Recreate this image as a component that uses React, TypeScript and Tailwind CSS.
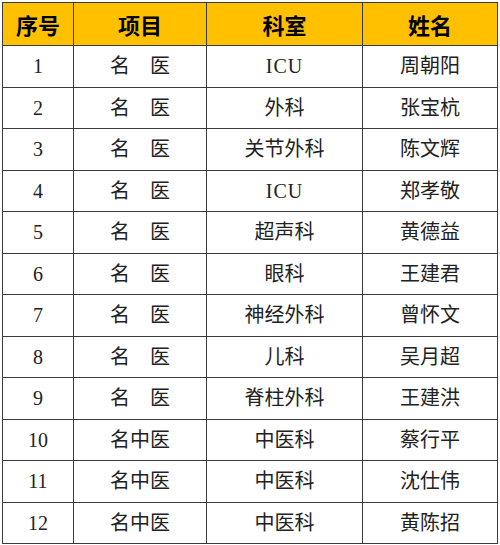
const rows: [string, string, string, string][] = [
  ["1", "名　医", "ICU", "周朝阳"],
  ["2", "名　医", "外科", "张宝杭"],
  ["3", "名　医", "关节外科", "陈文辉"],
  ["4", "名　医", "ICU", "郑孝敬"],
  ["5", "名　医", "超声科", "黄德益"],
  ["6", "名　医", "眼科", "王建君"],
  ["7", "名　医", "神经外科", "曾怀文"],
  ["8", "名　医", "儿科", "吴月超"],
  ["9", "名　医", "脊柱外科", "王建洪"],
  ["10", "名中医", "中医科", "蔡行平"],
  ["11", "名中医", "中医科", "沈仕伟"],
  ["12", "名中医", "中医科", "黄陈招"],
];

const headers = ["序号", "项目", "科室", "姓名"];

export default function App() {
  return (
    <div className="w-[500px] h-[545px] bg-white pt-[2px] pl-[2px]">
      <div className="grid grid-cols-[71px_133px_156px_135px] grid-rows-[43px_repeat(12,41.5px)] w-[496px] border-l border-t border-[#3a3a3a]">
        {headers.map((h) => (
          <div
            key={h}
            className="flex items-center justify-center bg-[#ffc000] border-r border-b border-[#3a3a3a] text-[22px] font-bold text-black font-['Noto_Sans_CJK_SC',sans-serif]"
          >
            {h}
          </div>
        ))}
        {rows.map((r) =>
          r.map((cell, i) => (
            <div
              key={r[0] + "-" + i}
              className="flex items-center justify-center border-r border-b border-[#3a3a3a] text-[20px] text-[#222] font-['Liberation_Serif','Noto_Sans_CJK_SC',serif]"
            >
              {cell === "ICU" ? <span className="tracking-[1px]">{cell}</span> : cell}
            </div>
          ))
        )}
      </div>
    </div>
  );
}
